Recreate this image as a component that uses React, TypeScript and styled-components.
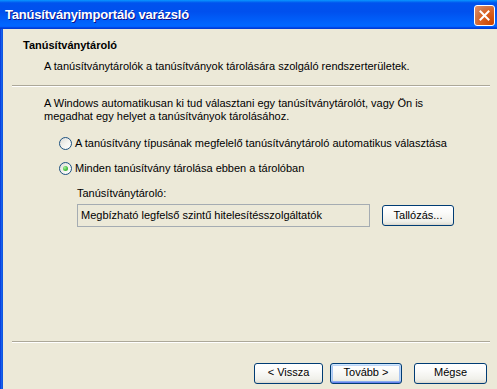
import React from "react";
import styled, { createGlobalStyle, css } from "styled-components";

const Global = createGlobalStyle`
  html, body { margin: 0; padding: 0; background: #ECE9D8; }
  body { font-family: "Liberation Sans", Arial, sans-serif; font-size: 11px; color: #000; }
  * { box-sizing: border-box; }
`;

const Window = styled.div`
  width: 497px;
  height: 389px;
  display: flex;
  flex-direction: column;
  overflow: hidden;
  background: #ECE9D8;
`;

const TitleBar = styled.div`
  height: 29px;
  flex: none;
  display: flex;
  align-items: center;
  padding: 0 2px 0 5px;
  background: linear-gradient(
    180deg,
    #0997ff 0%,
    #0053ee 10%,
    #0050ee 40%,
    #0066ff 85%,
    #0066ff 90%,
    #005bff 93%,
    #003dd7 96%,
    #003dd7 100%
  );
`;

const Title = styled.div`
  flex: 1;
  color: #fff;
  font-family: "Liberation Sans", Arial, sans-serif;
  font-weight: bold;
  font-size: 13px;
  letter-spacing: -0.2px;
  text-shadow: 1px 1px #0f1089;
  padding-bottom: 1px;
`;

const CloseButton = styled.div`
  width: 21px;
  height: 21px;
  border: 1px solid #fff;
  border-radius: 3px;
  background: radial-gradient(circle at 90% 90%, #cc4600 0%, #dc6527 55%, #cd7546 68%, #e8906a 100%);
  display: flex;
  align-items: center;
  justify-content: center;
  margin-top: 1px;
`;

const Frame = styled.div`
  flex: 1;
  display: flex;
  min-height: 0;
`;

const LeftBorder = styled.div`
  width: 3px;
  flex: none;
  background: linear-gradient(90deg, #0831d9, #166aee 60%, #0a48d9);
`;

const Content = styled.div`
  flex: 1;
  display: flex;
  flex-direction: column;
  background: #ECE9D8;
  line-height: 13px;
`;

const Header = styled.div`
  padding: 10px 0 0 20px;
`;

const HeaderTitle = styled.div`
  font-weight: bold;
`;

const HeaderSub = styled.div`
  margin: 8px 0 0 21px;
`;

const Separator = styled.div<{ $top: number }>`
  margin: ${(p) => p.$top}px 7px 0 9px;
  height: 2px;
  border-top: 1px solid #aca899;
  border-bottom: 1px solid #fff;
  flex: none;
`;

const Main = styled.div`
  padding: 10px 0 0 41px;
  flex: 1;
`;

const Paragraph = styled.div``;

const RadioRow = styled.div<{ $top: number }>`
  display: flex;
  align-items: center;
  gap: 3px;
  margin: ${(p) => p.$top}px 0 0 15px;
  height: 13px;
`;

const RadioCircle = styled.span<{ $checked?: boolean }>`
  width: 13px;
  height: 13px;
  border-radius: 50%;
  border: 1px solid #1c5180;
  background: linear-gradient(135deg, #dcdcd7 0%, #f4f4f0 55%, #ffffff 100%);
  display: flex;
  align-items: center;
  justify-content: center;
  flex: none;
  ${(p) =>
    p.$checked &&
    css`
      &::after {
        content: "";
        width: 5px;
        height: 5px;
        border-radius: 50%;
        background: radial-gradient(circle at 35% 35%, #a8f0a0 0%, #4fc246 50%, #21a121 100%);
      }
    `}
`;

const FieldLabel = styled.div`
  margin: 12px 0 0 33px;
`;

const FieldRow = styled.div`
  display: flex;
  align-items: center;
  margin: 4px 0 0 33px;
`;

const ReadOnlyField = styled.div`
  width: 293px;
  height: 23px;
  border: 1px solid #a5acb2;
  background: #ECE9D8;
  display: flex;
  align-items: center;
  padding: 0 3px 1px;
`;

const Button = styled.div<{ $default?: boolean; $w?: number }>`
  width: ${(p) => p.$w ?? 73}px;
  height: 21px;
  border: 1px solid #003c74;
  border-radius: 3px;
  background: linear-gradient(180deg, #ffffff 0%, #fcfcfb 30%, #f0f0ea 80%, #e3e2da 95%, #d6d0c5 100%);
  display: flex;
  align-items: center;
  justify-content: center;
  padding-bottom: 1px;
  flex: none;
  ${(p) =>
    p.$default &&
    css`
      box-shadow: inset 0 1px 0 #cee7ff, inset 0 -1px 0 #6982ee, inset 1px 0 0 #b8d4f5, inset -1px 0 0 #b8d4f5,
        inset 0 2px 0 #bcd4f6, inset 0 -2px 0 #89adf0, inset 2px 0 0 #a9c6f3, inset -2px 0 0 #a9c6f3;
    `}
`;

const BrowseButton = styled(Button)`
  margin-left: 12px;
`;

const ButtonBar = styled.div`
  display: flex;
  align-items: center;
  padding: 14px 0 0 251px;
  height: 46px;
  flex: none;
`;

const Gap = styled.div<{ $w: number }>`
  width: ${(p) => p.$w}px;
  flex: none;
`;

export default function App() {
  return (
    <>
      <Global />
      <Window>
        <TitleBar>
          <Title>Tanúsítványimportáló varázsló</Title>
          <CloseButton>
            <svg width="11" height="11" viewBox="0 0 11 11">
              <path d="M1.5 1.5 L9.5 9.5 M9.5 1.5 L1.5 9.5" stroke="#fff" strokeWidth="2" strokeLinecap="square" />
            </svg>
          </CloseButton>
        </TitleBar>
        <Frame>
          <LeftBorder />
          <Content>
            <Header>
              <HeaderTitle>Tanúsítványtároló</HeaderTitle>
              <HeaderSub>A tanúsítványtárolók a tanúsítványok tárolására szolgáló rendszerterületek.</HeaderSub>
            </Header>
            <Separator $top={12} />
            <Main>
              <Paragraph>
                A Windows automatikusan ki tud választani egy tanúsítványtárolót, vagy Ön is
                <br />
                megadhat egy helyet a tanúsítványok tárolásához.
              </Paragraph>
              <RadioRow $top={14}>
                <RadioCircle />
                <span>A tanúsítvány típusának megfelelő tanúsítványtároló automatikus választása</span>
              </RadioRow>
              <RadioRow $top={12}>
                <RadioCircle $checked />
                <span>Minden tanúsítvány tárolása ebben a tárolóban</span>
              </RadioRow>
              <FieldLabel>Tanúsítványtároló:</FieldLabel>
              <FieldRow>
                <ReadOnlyField>Megbízható legfelső szintű hitelesítésszolgáltatók</ReadOnlyField>
                <BrowseButton $w={72}>Tallózás...</BrowseButton>
              </FieldRow>
            </Main>
            <Separator $top={0} />
            <ButtonBar>
              <Button $w={69}>&lt; Vissza</Button>
              <Gap $w={7} />
              <Button $default $w={72}>Tovább &gt;</Button>
              <Gap $w={12} />
              <Button $w={73}>Mégse</Button>
            </ButtonBar>
          </Content>
        </Frame>
      </Window>
    </>
  );
}
